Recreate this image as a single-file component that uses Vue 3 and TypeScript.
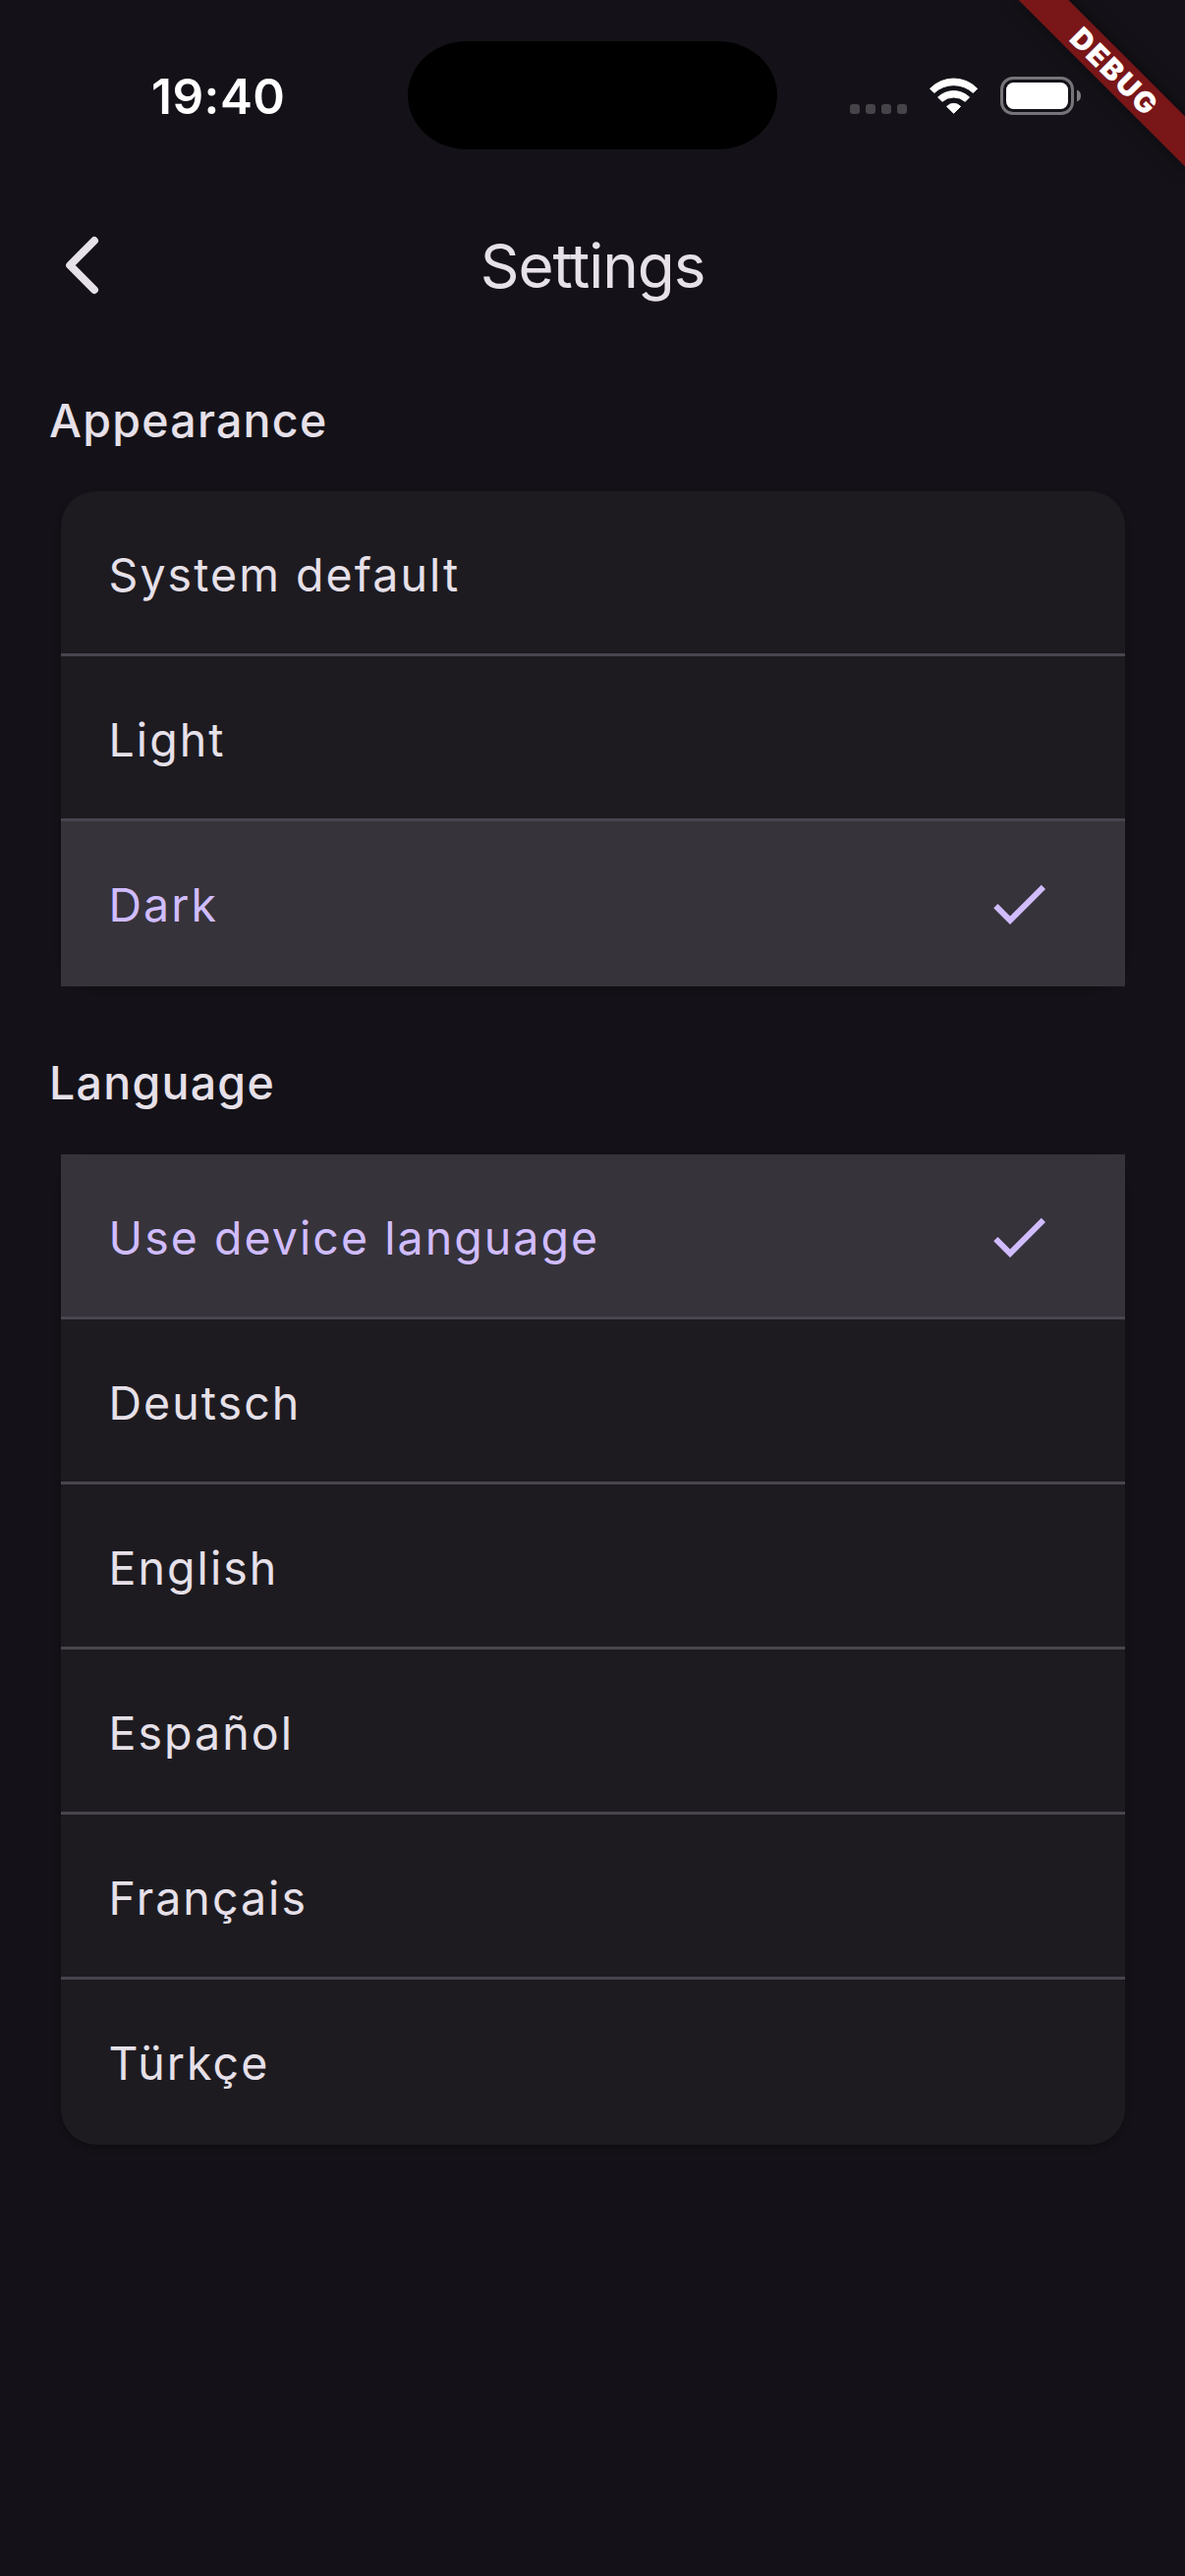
<script setup lang="ts">
import { ref } from 'vue'

interface Option {
  id: string
  label: string
}

interface Section {
  id: string
  title: string
  options: Option[]
}

const sections: Section[] = [
  {
    id: 'appearance',
    title: 'Appearance',
    options: [
      { id: 'system', label: 'System default' },
      { id: 'light', label: 'Light' },
      { id: 'dark', label: 'Dark' },
    ],
  },
  {
    id: 'language',
    title: 'Language',
    options: [
      { id: 'device', label: 'Use device language' },
      { id: 'de', label: 'Deutsch' },
      { id: 'en', label: 'English' },
      { id: 'es', label: 'Español' },
      { id: 'fr', label: 'Français' },
      { id: 'tr', label: 'Türkçe' },
    ],
  },
]

const selected = ref<Record<string, string>>({ appearance: 'dark', language: 'device' })
</script>

<template>
  <div class="screen">
    <div class="status">
      <div class="status-left"><span class="time">19:40</span></div>
      <div class="island"></div>
      <div class="status-right">
        <div class="signal"><i v-for="n in 4" :key="n"></i></div>
        <svg class="wifi" width="51" height="38" viewBox="0 0 51 38">
          <g fill="#fff" stroke="#fff" stroke-width="1" stroke-linejoin="round">
            <path d="M1.5 10.9A33.4 33.4 0 0 1 49.7 10.9L45.3 15A29 29 0 0 0 5.9 15Z" transform="translate(0 .4)" />
            <path d="M9.6 19.8A23.2 23.2 0 0 1 41.6 19.8L37.2 24.1A17.8 17.8 0 0 0 14 24.1Z" transform="translate(0 .2)" />
            <path d="M18.6 29.4A9.6 9.6 0 0 1 32.6 29.4L25.6 36.3Z" />
          </g>
        </svg>
        <svg class="battery" width="83" height="39" viewBox="0 0 83 39">
          <rect x="1.5" y="1.5" width="72" height="36" rx="11.5" fill="none" stroke="#767478" stroke-width="3" />
          <rect x="6" y="6" width="63" height="27" rx="7.5" fill="#fff" />
          <path d="M78 13.5Q82 15.2 82 19.5T78 25.5Z" fill="#7f7d81" />
        </svg>
      </div>
    </div>

    <header class="bar">
      <button class="back" type="button" aria-label="Back">
        <svg width="40" height="64" viewBox="0 0 40 64">
          <path d="M33 7L8.2 32L33 57" fill="none" stroke="#e6e0e9" stroke-width="8" stroke-linecap="round" stroke-linejoin="round" />
        </svg>
      </button>
      <h1>Settings</h1>
    </header>

    <section v-for="s in sections" :key="s.id">
      <h2>{{ s.title }}</h2>
      <div class="card">
        <div
          v-for="o in s.options"
          :key="o.id"
          class="row"
          :class="{ selected: selected[s.id] === o.id }"
          @click="selected[s.id] = o.id"
        >
          <span class="label">{{ o.label }}</span>
          <svg v-if="selected[s.id] === o.id" width="72" height="72" viewBox="0 0 24 24">
            <path fill="#d0bcff" d="M9 16.17L4.83 12l-1.42 1.41L9 19 21 7l-1.41-1.41z" />
          </svg>
        </div>
      </div>
    </section>

    <div class="ribbon"><span>DEBUG</span></div>
  </div>
</template>

<style>
body {
  background: #141218;
}
</style>

<style scoped>
.screen {
  position: relative;
  width: 1206px;
  height: 2622px;
  overflow: hidden;
  background: #141218;
  color: #e6e0e9;
  font-family: Inter, "Liberation Sans", sans-serif;
}

.status {
  display: flex;
  height: 177px;
  color: #fff;
}

.status-left {
  width: 415px;
  box-sizing: border-box;
  padding: 68px 0 0 154px;
}

.time {
  display: block;
  line-height: 60px;
  font-size: 49.5px;
  font-weight: 600;
  letter-spacing: 0.5px;
}

.island {
  width: 376px;
  height: 110px;
  margin-top: 42px;
  border-radius: 60px / 55px;
  background: #000;
}

.status-right {
  display: flex;
  align-items: flex-start;
  padding-left: 74px;
}

.signal {
  display: flex;
  gap: 6px;
  margin-top: 106px;
}

.signal i {
  width: 10px;
  height: 10px;
  border-radius: 3px;
  background: #464449;
}

.wifi {
  margin: 79px 0 0 22px;
}

.battery {
  margin: 78px 0 0 22px;
}

.bar {
  display: grid;
  grid-template-columns: 160px 1fr 160px;
  align-items: center;
  height: 186.5px;
}

.back {
  display: flex;
  justify-self: start;
  margin: 0 0 0 63px;
  padding: 0;
  border: 0;
  background: none;
}

h1 {
  margin: 0;
  padding-top: 2px;
  text-align: center;
  font-size: 62px;
  font-weight: 400;
  line-height: 80px;
  letter-spacing: -1.1px;
}

section {
  margin-bottom: 34.8px;
}

h2 {
  margin: 0 0 7.2px;
  padding-left: 50px;
  font-size: 46.5px;
  font-weight: 500;
  line-height: 129px;
  letter-spacing: 1.25px;
}

.card {
  margin: 0 61.5px;
  border-radius: 36px;
  background: #1d1b20;
  box-shadow: 0 3px 6px rgba(0, 0, 0, 0.3);
}

.row {
  display: flex;
  align-items: center;
  justify-content: space-between;
  box-sizing: border-box;
  height: 168px;
  padding: 0 72px 0 49px;
}

.row:not(:last-child) {
  box-shadow: inset 0 -3px #49454f;
}

.row.selected {
  background-color: #36333a;
  color: #d0bcff;
}

.label {
  font-size: 46.5px;
  font-weight: 370;
  line-height: 60px;
  letter-spacing: 2.05px;
  padding-top: 2px;
}

.ribbon {
  position: absolute;
  left: 1014px;
  top: 54px;
  width: 240px;
  height: 36px;
  transform: rotate(45deg);
  background: #791618;
  box-shadow: 0 0 18px rgba(0, 0, 0, 0.5);
  color: #fff;
  text-align: center;
  font-size: 29.5px;
  font-weight: 900;
  line-height: 36px;
}

.ribbon span {
  letter-spacing: 2px;
  padding-left: 2px;
}
</style>
